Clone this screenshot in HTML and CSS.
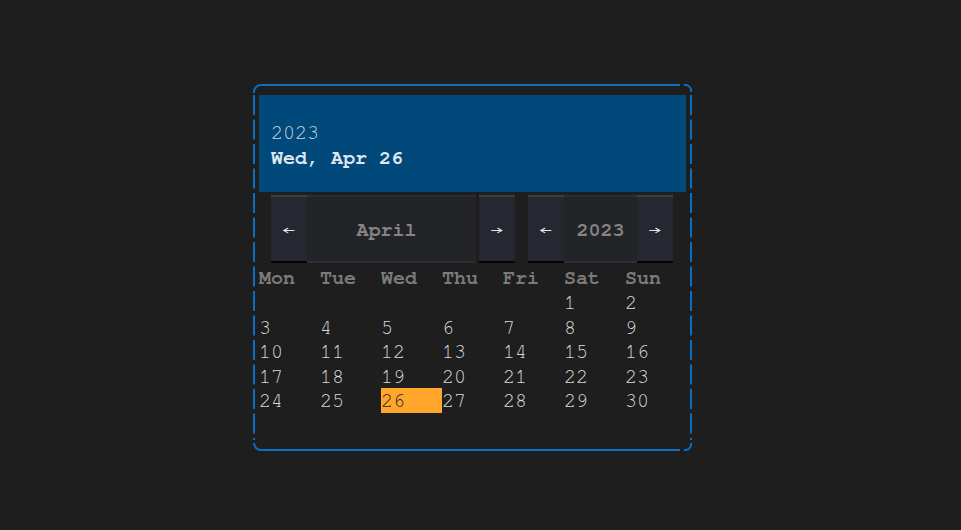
FILE: index.html
```html
<!DOCTYPE html>
<html>
<head>
<meta charset="utf-8">
<link rel="stylesheet" href="styles.css">
</head>
<body>
<div class="page">
  <div class="picker">
    <svg class="frame" width="439" height="367" viewBox="0 0 439 367">
      <path d="M1 9 A7 7 0 0 1 8 1 L427 1" />
      <path d="M431 1 A6 6 0 0 1 438 8" />
      <path d="M1 359 A7 7 0 0 0 8 366 L427 366" />
      <path d="M431 366 A6 6 0 0 0 438 359" />
      <path class="dash" d="M1 11 L1 356" />
      <path class="dash" d="M438 11 L438 356" />
    </svg>
    <div class="head">
      <div class="head-year">2023</div>
      <div class="head-date">Wed, Apr 26</div>
    </div>
    <div class="nav">
      <div class="group">
        <button class="arrow">←</button>
        <div class="label month">April</div>
        <button class="arrow gapl">→</button>
      </div>
      <div class="group">
        <button class="arrow">←</button>
        <div class="label year">2023</div>
        <button class="arrow">→</button>
      </div>
    </div>
    <div class="grid">
      <div class="dow">Mon</div><div class="dow">Tue</div><div class="dow">Wed</div><div class="dow">Thu</div><div class="dow">Fri</div><div class="dow">Sat</div><div class="dow">Sun</div>
      <div class="day"></div><div class="day"></div><div class="day"></div><div class="day"></div><div class="day"></div><div class="day">1</div><div class="day">2</div>
      <div class="day">3</div><div class="day">4</div><div class="day">5</div><div class="day">6</div><div class="day">7</div><div class="day">8</div><div class="day">9</div>
      <div class="day">10</div><div class="day">11</div><div class="day">12</div><div class="day">13</div><div class="day">14</div><div class="day">15</div><div class="day">16</div>
      <div class="day">17</div><div class="day">18</div><div class="day">19</div><div class="day">20</div><div class="day">21</div><div class="day">22</div><div class="day">23</div>
      <div class="day">24</div><div class="day">25</div><div class="day sel">26</div><div class="day">27</div><div class="day">28</div><div class="day">29</div><div class="day">30</div>
      <div class="day"></div><div class="day"></div><div class="day"></div><div class="day"></div><div class="day"></div><div class="day"></div><div class="day"></div>
    </div>
  </div>
</div>
</body>
</html>
```
FILE: styles.css
```css
html, body {
  margin: 0;
  padding: 0;
  background: #1e1e1e;
}
body {
  width: 961px;
  height: 530px;
  overflow: hidden;
  font-family: "Nimbus Mono PS", "Nimbus Mono L", "FreeMono", "Courier 10 Pitch", "Courier New", "Liberation Mono", monospace;
  font-size: 20px;
}
.page {
  padding: 84px 0 0 253px;
}
.picker {
  position: relative;
  box-sizing: border-box;
  width: 439px;
  height: 367px;
  padding: 11px 6px 0 6px;
}
.frame {
  position: absolute;
  left: 0;
  top: 0;
  fill: none;
  stroke: #0a6fc2;
  stroke-width: 2;
}
.frame .dash {
  stroke-dasharray: 20 4.5;
}
.head {
  background: #00497a;
  height: 97px;
  padding: 26px 12px 0 12px;
  box-sizing: border-box;
  color: #dfe6ee;
}
.head-year {
  font-weight: 300;
  line-height: 25px;
  color: #c9d4e0;
}
.head-date {
  font-weight: bold;
  line-height: 25px;
}
.nav {
  display: flex;
  gap: 13px;
  padding: 3px 0 0 12px;
  height: 68px;
}
.group {
  display: flex;
  height: 68px;
}
.arrow {
  width: 36px;
  height: 68px;
  margin: 0;
  padding: 1px 0 0 0;
  border: none;
  border-top: 2px solid #3b3e43;
  border-bottom: 2px solid #050505;
  background: #252830;
  color: #e6e6e6;
  font-family: "Nimbus Mono PS", "Nimbus Mono L", "FreeMono", "Courier 10 Pitch", "Courier New", "Liberation Mono", monospace;
  font-size: 24px;
}
.gapl {
  margin-left: 3px;
}
.label {
  display: flex;
  align-items: center;
  justify-content: center;
  height: 68px;
  box-sizing: border-box;
  padding-top: 1px;
  border-top: 2px solid #2a2d31;
  border-bottom: 2px solid #2a2d31;
  background: #222428;
  color: #858585;
  font-weight: bold;
}
.month {
  width: 169px;
  padding-right: 10px;
}
.year {
  width: 73px;
}
.grid {
  display: grid;
  grid-template-columns: repeat(7, 61px);
  grid-auto-rows: 24.5px;
  padding-top: 2.5px;
}
.dow {
  color: #7b7b7b;
  font-weight: bold;
  line-height: 24.5px;
  box-sizing: border-box;
}
.day {
  color: #dadada;
  line-height: 22px;
  padding: 2px 0 0 0;
  box-sizing: border-box;
}
.sel {
  background: #ffa62b;
  color: #2a2a2a;
}
```
